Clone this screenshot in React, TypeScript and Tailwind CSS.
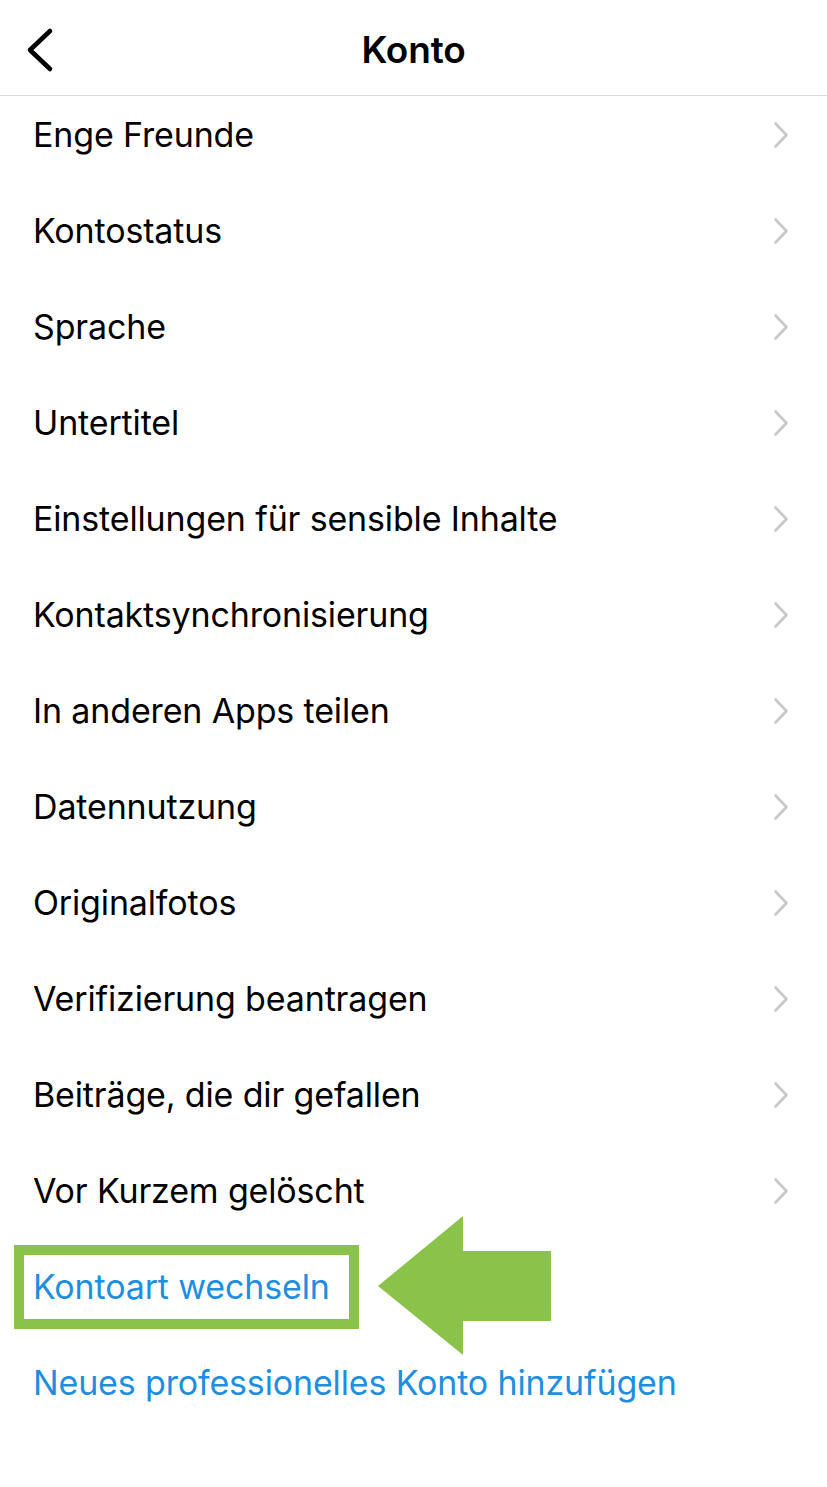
import React from "react";

const items = [
  "Enge Freunde",
  "Kontostatus",
  "Sprache",
  "Untertitel",
  "Einstellungen für sensible Inhalte",
  "Kontaktsynchronisierung",
  "In anderen Apps teilen",
  "Datennutzung",
  "Originalfotos",
  "Verifizierung beantragen",
  "Beiträge, die dir gefallen",
  "Vor Kurzem gelöscht",
];

function Chevron() {
  return (
    <svg width="16" height="28" viewBox="0 0 16 28" className="shrink-0">
      <path d="M2.5 2.5 L13.5 14 L2.5 25.5" fill="none" stroke="#c7c7cc" strokeWidth="2.6" strokeLinecap="round" strokeLinejoin="round" />
    </svg>
  );
}

export default function App() {
  return (
    <div className="relative w-[827px] h-[1487px] bg-white overflow-hidden text-black" style={{ fontFamily: "Inter, 'Noto Sans', sans-serif" }}>
      <header className="relative h-[96px] border-b border-[#dbdbdb] flex items-center justify-center">
        <button className="absolute left-[24px] top-[26px] w-[32px] h-[48px] flex items-center justify-center">
          <svg width="32" height="48" viewBox="0 0 32 48">
            <path d="M26 5 L6 24 L26 43" fill="none" stroke="#000" strokeWidth="4.6" strokeLinecap="round" strokeLinejoin="round" />
          </svg>
        </button>
        <h1 className="text-[37px] font-semibold leading-[40px] pt-[4px] tracking-[-0.2px]">Konto</h1>
      </header>
      <ul>
        {items.map((t) => (
          <li key={t} className="h-[96px] pl-[33px] pr-[38px] pt-[19px] flex items-start justify-between">
            <span className="text-[34px] leading-[40px] tracking-[-0.15px]">{t}</span>
            <div className="h-[40px] flex items-center">
              <Chevron />
            </div>
          </li>
        ))}
        <li className="h-[96px] pl-[33px] pt-[19px]">
          <span className="text-[34px] leading-[40px] tracking-[-0.15px] text-[#1e8fdf]">Kontoart wechseln</span>
        </li>
        <li className="h-[96px] pl-[33px] pt-[19px]">
          <span className="text-[34px] leading-[40px] tracking-[-0.15px] text-[#1e8fdf]">Neues professionelles Konto hinzufügen</span>
        </li>
      </ul>
      <div className="absolute left-[14px] top-[1245px] w-[345px] h-[84px] border-[10px] border-[#8bc34a]" />
      <svg className="absolute left-[376px] top-[1214px]" width="178" height="144" viewBox="376 1214 178 144">
        <polygon points="378,1286 463,1216 463,1251 551,1251 551,1321 463,1321 463,1355" fill="#8bc34a" />
      </svg>
    </div>
  );
}
